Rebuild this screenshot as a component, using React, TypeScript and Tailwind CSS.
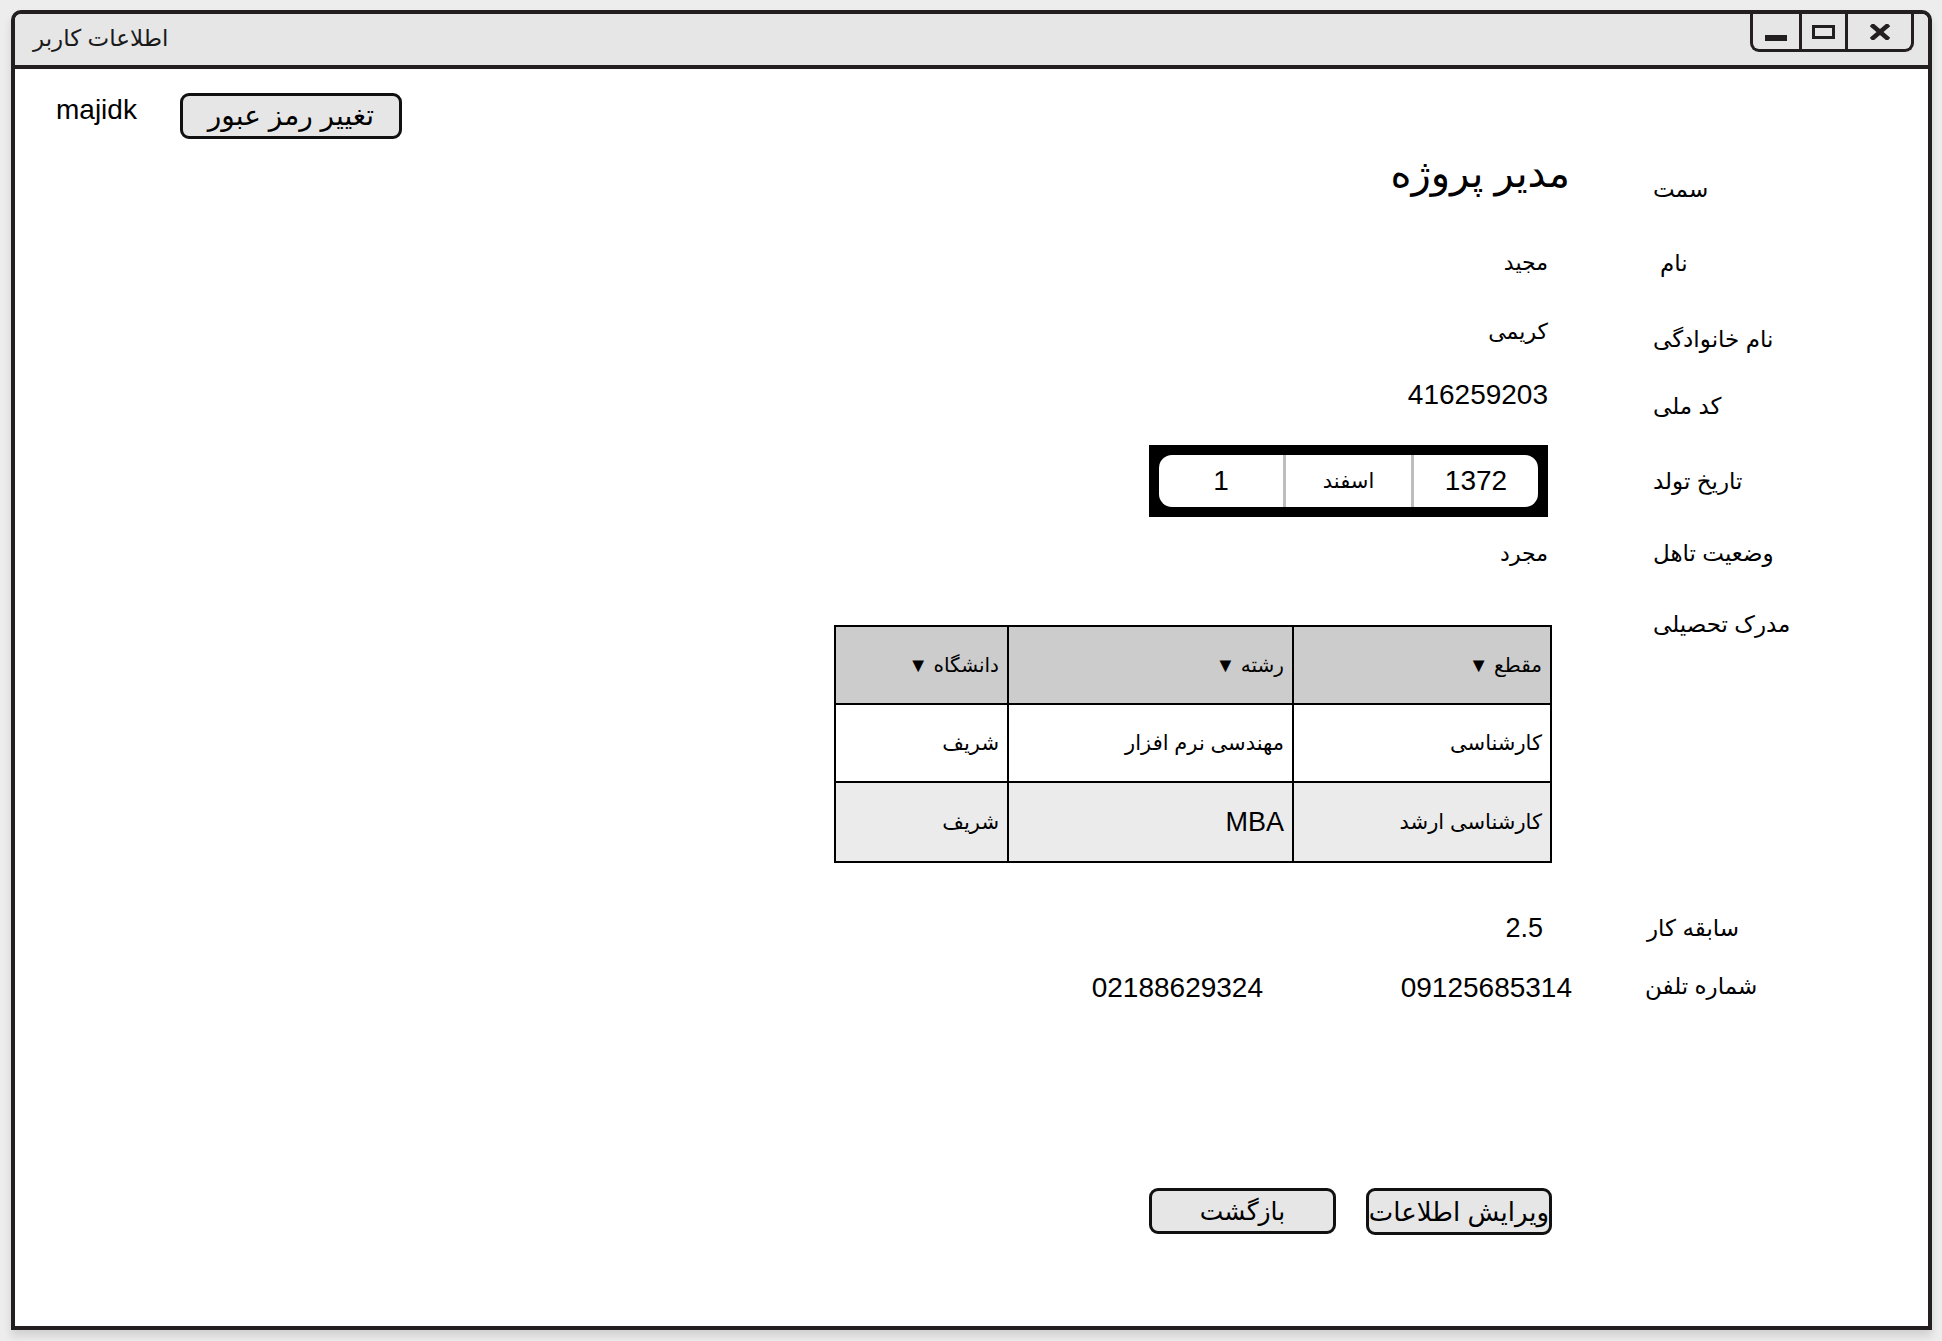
import React from "react";

const FONT = "font-['Liberation_Sans','DejaVu_Sans',sans-serif]";

function Controls() {
  return (
    <div className="mr-[14px] flex h-[38px] rounded-b-[9px] border-x-[3px] border-b-[3px] border-[#231f20] bg-[#e6e6e6]">
      <div className="flex w-[46px] items-center justify-center">
        <div className="mt-[13px] h-[6px] w-[22px] bg-[#231f20]" />
      </div>
      <div className="flex w-[46px] items-center justify-center border-l-[3px] border-[#231f20]">
        <div className="h-[14px] w-[23px] border-[3px] border-[#231f20]" />
      </div>
      <div className="flex w-[66px] items-center justify-center border-l-[3px] border-[#231f20]">
        <svg width="20" height="16" viewBox="0 0 20 16">
          <path d="M3 2 L17 14 M17 2 L3 14" stroke="#231f20" strokeWidth="4.5" strokeLinecap="square" />
        </svg>
      </div>
    </div>
  );
}

function Row({
  h,
  mt = 0,
  vw = 1533,
  gap = 105,
  value,
  label,
  vpt = 0,
  lpt = 0,
  items = "items-center",
}: {
  h: number;
  mt?: number;
  vw?: number;
  gap?: number;
  value: React.ReactNode;
  label: React.ReactNode;
  vpt?: number;
  lpt?: number;
  items?: string;
}) {
  return (
    <div className={`flex ${items}`} style={{ height: h, marginTop: mt }}>
      <div className="flex justify-end" style={{ width: vw, paddingTop: vpt }}>
        {value}
      </div>
      <div style={{ marginLeft: gap, paddingTop: lpt }} className="text-left text-[23px] leading-[28px] text-black" dir="rtl">
        {label}
      </div>
    </div>
  );
}

export default function App() {
  return (
    <div className={`min-h-screen w-full bg-[#ededed] pl-[11px] pt-[10px] ${FONT}`}>
      <div className="flex h-[1320px] w-[1921px] flex-col rounded-t-[10px] border-4 border-[#231f20] bg-white shadow-[0_6px_8px_rgba(0,0,0,0.12)]">
        {/* title bar */}
        <div className="flex h-[55px] items-start justify-between rounded-t-[6px] border-b-4 border-[#231f20] bg-[#e6e6e6]">
          <div className="mb-[3px] self-center pl-[18px] text-[23px] leading-[28px] text-[#1a1a1a]" dir="rtl">
            اطلاعات کاربر
          </div>
          <Controls />
        </div>

        {/* content */}
        <div className="flex flex-1 flex-col text-black">
          {/* top row */}
          <div className="mt-[24px] flex items-start">
            <div className="w-[165px] pl-[41px] pt-[1px] text-[28px] leading-[32px]">majidk</div>
            <button className="flex h-[46px] w-[222px] items-center justify-center rounded-[9px] border-[3px] border-[#111] bg-[#e6e6e6] text-[28px] leading-none text-black" dir="rtl">
              تغییر رمز عبور
            </button>
          </div>

          {/* سمت */}
          <Row
            h={60}
            mt={11}
            vw={1555}
            gap={83}
            value={<span className="mb-[14px] text-[40px] leading-[46px]" dir="rtl">مدیر پروژه</span>}
            label="سمت"
            lpt={18}
          />
          {/* نام */}
          <Row
            h={60}
            mt={23}
            gap={112}
            value={<span className="text-[22px] leading-[28px]" dir="rtl">مجید</span>}
            label="نام"
          />
          <Row
            h={60}
            mt={9}
            value={<span className="text-[22px] leading-[28px]" dir="rtl">کریمی</span>}
            label="نام خانوادگی"
            lpt={14}
          />
          <Row
            h={60}
            mt={3}
            value={<span className="text-[28px] leading-[32px]">416259203</span>}
            label="کد ملی"
            lpt={22}
          />
          {/* date */}
          <Row
            h={72}
            mt={20}
            value={
              <div className="flex h-[72px] w-[399px] items-center bg-black px-[10px]">
                <div className="flex h-[52px] w-full items-stretch overflow-hidden rounded-[13px] bg-white">
                  <div className="flex w-[124px] items-center justify-center text-[28px]">1</div>
                  <div className="flex w-[128px] items-center justify-center border-l-[3px] border-[#bdbdbd] text-[21px]" dir="rtl">
                    اسفند
                  </div>
                  <div className="flex flex-1 items-center justify-center border-l-[3px] border-[#bdbdbd] text-[28px]">
                    1372
                  </div>
                </div>
              </div>
            }
            label="تاریخ تولد"
          />
          <Row
            h={60}
            mt={6}
            value={<span className="mt-[2px] text-[22px] leading-[28px]" dir="rtl">مجرد</span>}
            label="وضعیت تاهل"
          />
          {/* مدرک تحصیلی + table */}
          <Row
            h={258}
            mt={21}
            items="items-start"
            vw={1537}
            gap={101}
            vpt={21}
            value={
              <table dir="rtl" className="w-[718px] border-collapse border-2 border-black text-right">
                <thead>
                  <tr className="h-[78px] bg-[#cccccc]">
                    <th className="w-[258px] border-2 border-black px-[8px] text-[20px] font-normal">مقطع ▼</th>
                    <th className="w-[285px] border-2 border-black px-[8px] text-[20px] font-normal">رشته ▼</th>
                    <th className="border-2 border-black px-[8px] text-[20px] font-normal">دانشگاه ▼</th>
                  </tr>
                </thead>
                <tbody>
                  <tr className="h-[78px] bg-white">
                    <td className="border-2 border-black px-[8px] text-[21px]">کارشناسی</td>
                    <td className="border-2 border-black px-[8px] text-[21px]">مهندسی نرم افزار</td>
                    <td className="border-2 border-black px-[8px] text-[21px]">شریف</td>
                  </tr>
                  <tr className="h-[80px] bg-[#ebebeb]">
                    <td className="border-2 border-black px-[8px] text-[21px]">کارشناسی ارشد</td>
                    <td className="border-2 border-black px-[8px] text-[27px]">MBA</td>
                    <td className="border-2 border-black px-[8px] text-[21px]">شریف</td>
                  </tr>
                </tbody>
              </table>
            }
            label="مدرک تحصیلی"
            lpt={6}
          />
          <Row
            h={60}
            mt={36}
            vw={1528}
            gap={104}
            value={<span className="text-[27px] leading-[32px]">2.5</span>}
            label="سابقه کار"
          />
          <div className="flex items-center" style={{ height: 60 }}>
            <div className="flex w-[1248px] justify-end text-[28px] leading-[32px]">02188629324</div>
            <div className="flex w-[309px] justify-end text-[28px] leading-[32px]">09125685314</div>
            <div className="mb-[4px] ml-[73px] text-[23px] leading-[28px]" dir="rtl">شماره تلفن</div>
          </div>

          {/* buttons */}
          <div className="mt-[170px] flex items-start pl-[1134px]">
            <button className="flex h-[46px] w-[187px] items-center justify-center rounded-[9px] border-[3px] border-[#111] bg-[#e6e6e6] text-[25px] leading-none text-black" dir="rtl">
              بازگشت
            </button>
            <button className="ml-[30px] flex h-[47px] w-[186px] items-center justify-center overflow-hidden whitespace-nowrap rounded-[9px] border-[3px] border-[#111] bg-[#e6e6e6] text-[26px] leading-none text-black" dir="rtl">
              ویرایش اطلاعات
            </button>
          </div>
        </div>
      </div>
    </div>
  );
}
